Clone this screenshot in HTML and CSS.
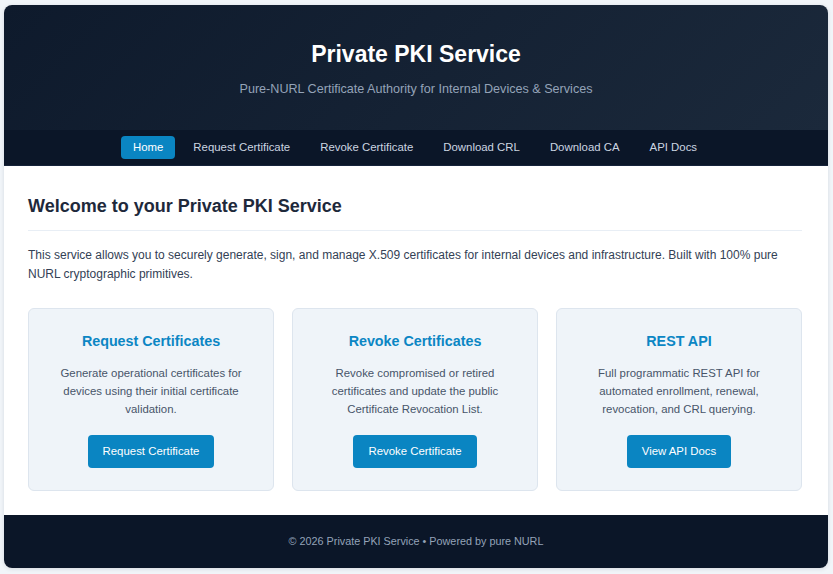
FILE: index.html
```html
<!DOCTYPE html>
<html lang="en">
<head>
<meta charset="utf-8">
<title>Private PKI Service</title>
<link rel="stylesheet" href="styles.css">
</head>
<body>
<div class="container">
  <header class="hero">
    <h1 class="hero-title">Private PKI Service</h1>
    <p class="hero-sub">Pure-NURL Certificate Authority for Internal Devices &amp; Services</p>
  </header>
  <nav class="nav">
    <a class="nav-link active" href="#">Home</a>
    <a class="nav-link" href="#">Request Certificate</a>
    <a class="nav-link" href="#">Revoke Certificate</a>
    <a class="nav-link" href="#">Download CRL</a>
    <a class="nav-link" href="#">Download CA</a>
    <a class="nav-link" href="#">API Docs</a>
  </nav>
  <main class="main">
    <h2 class="welcome">Welcome to your Private PKI Service</h2>
    <p class="intro">This service allows you to securely generate, sign, and manage X.509 certificates for internal devices and infrastructure. Built with 100% pure NURL cryptographic primitives.</p>
    <div class="cards">
      <section class="card">
        <h3 class="card-title">Request Certificates</h3>
        <p class="card-text">Generate operational certificates for devices using their initial certificate validation.</p>
        <a class="btn" href="#">Request Certificate</a>
      </section>
      <section class="card">
        <h3 class="card-title">Revoke Certificates</h3>
        <p class="card-text">Revoke compromised or retired certificates and update the public Certificate Revocation List.</p>
        <a class="btn" href="#">Revoke Certificate</a>
      </section>
      <section class="card">
        <h3 class="card-title">REST API</h3>
        <p class="card-text">Full programmatic REST API for automated enrollment, renewal, revocation, and CRL querying.</p>
        <a class="btn" href="#">View API Docs</a>
      </section>
    </div>
  </main>
  <footer class="footer">© 2026 Private PKI Service • Powered by pure NURL</footer>
</div>
</body>
</html>
```
FILE: styles.css
```css
* { box-sizing: border-box; }
html, body { margin: 0; padding: 0; }
body {
  background: #f1f5f9;
  font-family: "Liberation Sans", Arial, sans-serif;
  padding: 5px 5px 6px 4px;
}
.container {
  background: #ffffff;
  border-radius: 8px;
  overflow: hidden;
  box-shadow: 0 1px 4px rgba(15, 23, 42, 0.12);
}
.hero {
  background: linear-gradient(135deg, #0e1a2c 0%, #1b293b 100%);
  text-align: center;
  padding: 35px 20px 33px;
}
.hero-title {
  margin: 0;
  color: #ffffff;
  font-size: 23px;
  line-height: 29px;
  font-weight: 700;
}
.hero-sub {
  margin: 12px 0 0;
  color: #94a3b8;
  font-size: 12.6px;
  line-height: 16px;
}
.nav {
  background: #0b1628;
  display: flex;
  justify-content: center;
  gap: 6px;
  padding: 6px 2px 6px 0;
  border-bottom: 1px solid #16233a;
}
.nav-link {
  color: #cbd5e1;
  text-decoration: none;
  font-size: 11.4px;
  line-height: 11px;
  padding: 6px 12px;
  border-radius: 4px;
}
.nav-link.active {
  background: #0a85c2;
  color: #ffffff;
}
.main {
  padding: 30px 26px 24px 24px;
}
.welcome {
  margin: 0;
  font-size: 18px;
  line-height: 21px;
  font-weight: 700;
  color: #1e293b;
  padding-bottom: 13px;
  border-bottom: 1px solid #e8eef5;
}
.intro {
  margin: 15px 0 24px;
  font-size: 12px;
  line-height: 19px;
  color: #334155;
}
.cards {
  display: grid;
  grid-template-columns: repeat(3, 1fr);
  gap: 18px;
}
.card {
  background: #eff4f9;
  border: 1px solid #dde5ee;
  border-radius: 6px;
  padding: 23px 20px 22px;
  text-align: center;
}
.card-title {
  margin: 0;
  font-size: 14.3px;
  line-height: 18px;
  font-weight: 700;
  color: #0b86c4;
}
.card-text {
  margin: 14px 0 17px;
  font-size: 11.4px;
  line-height: 18px;
  color: #475569;
}
.btn {
  display: inline-block;
  background: #0a85c2;
  color: #ffffff;
  text-decoration: none;
  font-size: 11.4px;
  line-height: 13px;
  padding: 10px 15px;
  border-radius: 4px;
}
.footer {
  background: #0b1628;
  color: #94a3b8;
  text-align: center;
  font-size: 10.8px;
  line-height: 14px;
  padding: 19px 20px 20px;
}
```
